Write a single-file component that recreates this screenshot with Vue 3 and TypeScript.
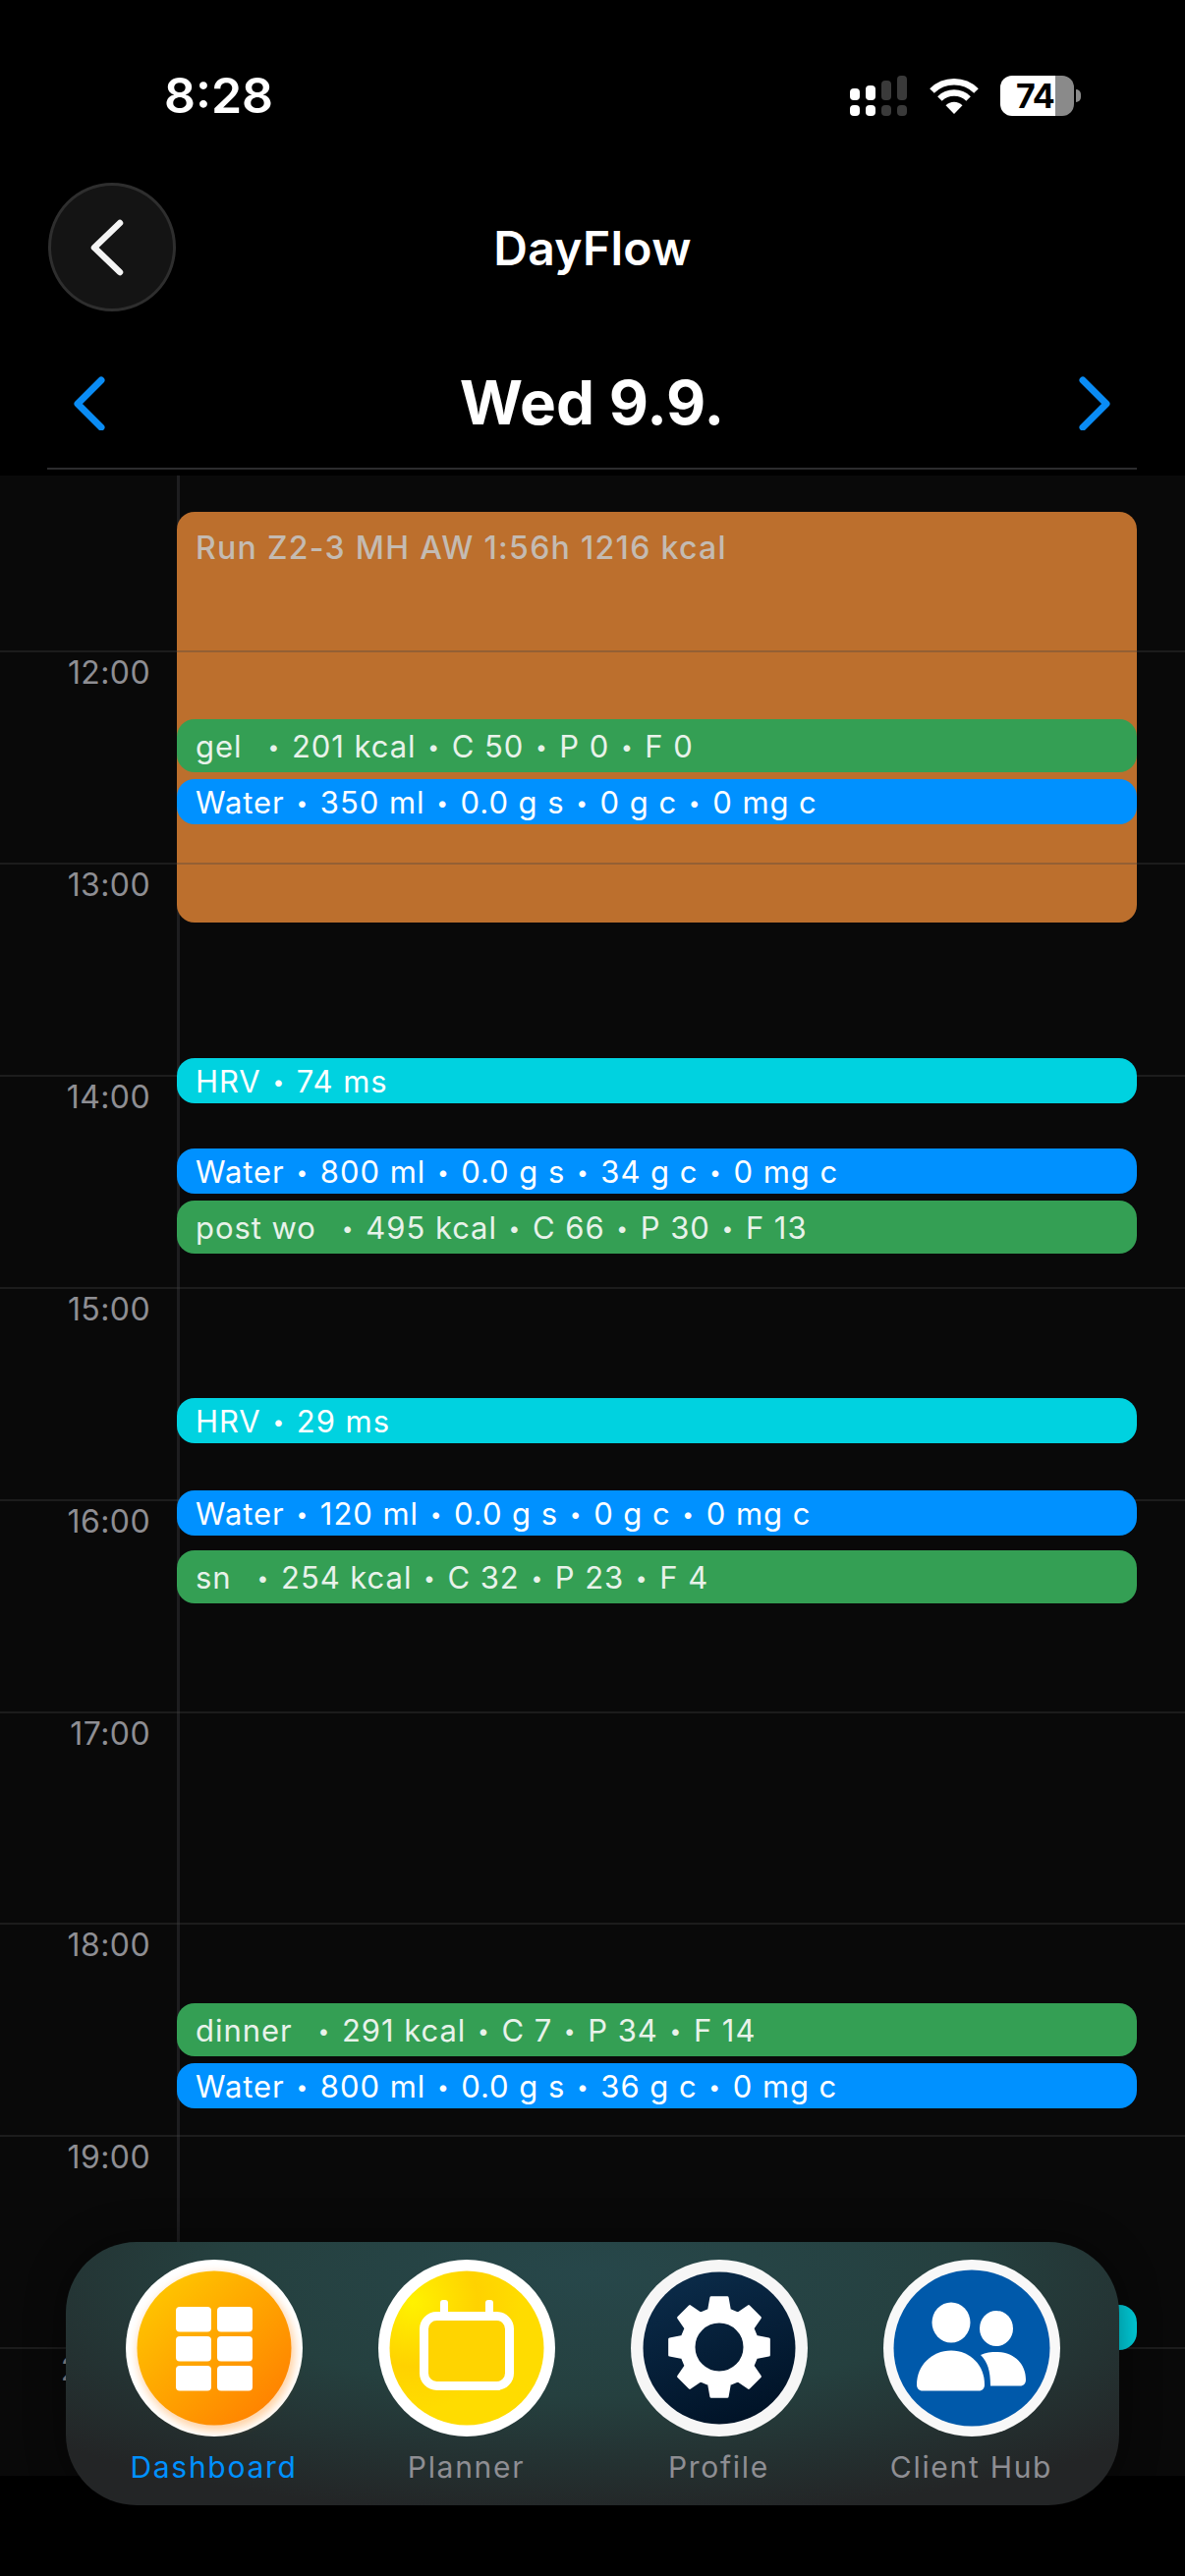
<script setup lang="ts">
interface Ev { top: number; h: number; kind: string; name: string; rest?: string }

const tlTop = 484
const hours = [12, 13, 14, 15, 16, 17, 18, 19, 20]
const lineY = (i: number) => 662 - tlTop + i * 215.9

const events: Ev[] = [
  { top: 732, h: 54, kind: 'meal', name: 'gel', rest: '• 201 kcal • C 50 • P 0 • F 0' },
  { top: 793, h: 46, kind: 'water', name: 'Water • 350 ml • 0.0 g s • 0 g c • 0 mg c' },
  { top: 1077, h: 46, kind: 'hrv', name: 'HRV • 74 ms' },
  { top: 1169, h: 46, kind: 'water', name: 'Water • 800 ml • 0.0 g s • 34 g c • 0 mg c' },
  { top: 1222, h: 54, kind: 'meal', name: 'post wo', rest: '• 495 kcal • C 66 • P 30 • F 13' },
  { top: 1423, h: 46, kind: 'hrv', name: 'HRV • 29 ms' },
  { top: 1517, h: 46, kind: 'water', name: 'Water • 120 ml • 0.0 g s • 0 g c • 0 mg c' },
  { top: 1578, h: 54, kind: 'meal', name: 'sn', rest: '• 254 kcal • C 32 • P 23 • F 4' },
  { top: 2039, h: 54, kind: 'meal', name: 'dinner', rest: '• 291 kcal • C 7 • P 34 • F 14' },
  { top: 2100, h: 46, kind: 'water', name: 'Water • 800 ml • 0.0 g s • 36 g c • 0 mg c' },
  { top: 2346, h: 46, kind: 'hrv', name: '' }
]

const parts = (s?: string): string[] => (s ? s.split('•') : [])

const grid = [
  [51, 48], [93, 48], [51, 78], [93, 78], [51, 108], [93, 108]
]

function gearPath(cx: number, cy: number): string {
  const rOut = 51, rRoot = 39, teeth = 8
  const pts: string[] = []
  for (let i = 0; i < teeth; i++) {
    const a = (i * Math.PI * 2) / teeth - Math.PI / 2
    const offs: [number, number][] = [[rRoot, -0.27], [rOut, -0.16], [rOut, 0.16], [rRoot, 0.27]]
    for (const [r, d] of offs) {
      pts.push(`${(cx + r * Math.cos(a + d)).toFixed(2)} ${(cy + r * Math.sin(a + d)).toFixed(2)}`)
    }
  }
  const hole = 26
  return `M${pts.join('L')}Z M${cx - hole} ${cy}a${hole} ${hole} 0 1 0 ${hole * 2} 0a${hole} ${hole} 0 1 0 ${-hole * 2} 0Z`
}
const gear = gearPath(90, 89)
</script>

<template>
  <div class="screen">
    <header class="status">
      <span class="clock">8:28</span>
      <div class="status-icons">
        <svg class="signal" width="58" height="41" viewBox="0 0 58 41">
          <rect x="0" y="13" width="10" height="12" rx="4" fill="#fff" />
          <rect x="16" y="10" width="10" height="15" rx="4" fill="#fff" />
          <rect x="32" y="5" width="10" height="20" rx="4" fill="#3a3a3a" />
          <rect x="48" y="0" width="10" height="25" rx="4" fill="#3a3a3a" />
          <rect x="0" y="30" width="10" height="11" rx="4" fill="#fff" />
          <rect x="16" y="30" width="10" height="11" rx="4" fill="#fff" />
          <rect x="32" y="30" width="10" height="11" rx="4" fill="#3a3a3a" />
          <rect x="48" y="30" width="10" height="11" rx="4" fill="#3a3a3a" />
        </svg>
        <svg class="wifi" width="50" height="37" viewBox="0 0 50 37">
          <path d="M2.500 13.500A32 32 0 0 1 47.500 13.500" fill="none" stroke="#fff" stroke-width="6.500" />
          <path d="M10.400 21.500A21 21 0 0 1 39.600 21.500" fill="none" stroke="#fff" stroke-width="6.500" />
          <path d="M25 37L16.500 28.200A12 12 0 0 1 33.500 28.200Z" fill="#fff" />
        </svg>
        <div class="battery"><span>74</span></div>
        <i class="nub"></i>
      </div>
    </header>

    <div class="navbar">
      <button class="back" aria-label="Back">
        <svg width="34" height="60" viewBox="0 0 34 60">
          <path d="M30 5L4 30L30 55" fill="none" stroke="#f4f4f4" stroke-width="6.500" stroke-linecap="round" stroke-linejoin="round" />
        </svg>
      </button>
      <h1 class="title">DayFlow</h1>
    </div>

    <div class="daterow">
      <svg width="32" height="56" viewBox="0 0 32 56">
        <path d="M28 5L4 29L28 53" fill="none" stroke="#0a8cf5" stroke-width="7" stroke-linecap="round" stroke-linejoin="round" />
      </svg>
      <h2 class="date">Wed 9.9.</h2>
      <svg width="32" height="56" viewBox="0 0 32 56">
        <path d="M4 5L28 29L4 53" fill="none" stroke="#0a8cf5" stroke-width="7" stroke-linecap="round" stroke-linejoin="round" />
      </svg>
    </div>

    <div class="divider"></div>

    <main class="timeline">
      <i class="vline"></i>
      <div class="ev-run">Run Z2-3 MH AW 1:56h 1216 kcal</div>
      <template v-for="(h, i) in hours" :key="h">
        <i class="hline" :style="{ top: lineY(i) + 'px' }"></i>
        <span class="hour" :style="{ top: lineY(i) + 'px' }">{{ h }}:00</span>
      </template>
      <div
        v-for="e in events"
        :key="e.top"
        class="ev"
        :class="e.kind"
        :style="{ top: e.top - tlTop + 'px', height: e.h + 'px' }"
      >
        <span class="txt" :class="{ nm: e.rest }"><template v-for="(p, j) in parts(e.name)" :key="j"><b v-if="j" class="dot">•</b>{{ p }}</template></span>
        <span v-if="e.rest" class="txt"><template v-for="(p, j) in parts(e.rest)" :key="j"><b v-if="j" class="dot">•</b>{{ p }}</template></span>
      </div>
    </main>

    <nav class="tabbar">
      <div class="tab active">
        <svg width="180" height="180" viewBox="0 0 180 180">
          <defs>
            <linearGradient id="gOrange" x1="0.15" y1="0.1" x2="0.85" y2="0.85">
              <stop offset="0" stop-color="#ffc400" />
              <stop offset="1" stop-color="#ff8500" />
            </linearGradient>
            <filter id="blurO" x="-20%" y="-20%" width="140%" height="140%"><feGaussianBlur stdDeviation="5" /></filter>
          </defs>
          <circle cx="90" cy="90" r="90" fill="#fff" />
          <circle cx="92" cy="94" r="80" fill="#ff9a30" opacity=".45" filter="url(#blurO)" />
          <circle cx="90" cy="90" r="78.500" fill="url(#gOrange)" />
          <rect v-for="g in grid" :key="g.join()" :x="g[0]" :y="g[1]" width="36" height="25.500" rx="4" fill="#fff" />
        </svg>
        <span>Dashboard</span>
      </div>
      <div class="tab">
        <svg width="180" height="180" viewBox="0 0 180 180">
          <defs>
            <radialGradient id="gYellow" cx="0.15" cy="0.2" r="0.7">
              <stop offset="0" stop-color="#fff200" />
              <stop offset="0.6" stop-color="#ffd200" />
              <stop offset="1" stop-color="#ffdc00" />
            </radialGradient>
          </defs>
          <circle cx="90" cy="90" r="90" fill="#fff" />
          <circle cx="90" cy="90" r="78.500" fill="url(#gYellow)" />
          <rect x="46.500" y="57.500" width="87" height="71" rx="13" fill="#ffd400" stroke="#fff" stroke-width="9" />
          <rect x="63" y="41" width="8" height="16" rx="3" fill="#fff" />
          <rect x="109" y="41" width="8" height="16" rx="3" fill="#fff" />
        </svg>
        <span>Planner</span>
      </div>
      <div class="tab">
        <svg width="180" height="180" viewBox="0 0 180 180">
          <defs>
            <linearGradient id="gNavy" x1="0.3" y1="0" x2="0.7" y2="1">
              <stop offset="0" stop-color="#0b2b49" />
              <stop offset="1" stop-color="#001226" />
            </linearGradient>
          </defs>
          <circle cx="90" cy="90" r="90" fill="#f6f6f6" />
          <circle cx="90" cy="90" r="77.500" fill="url(#gNavy)" />
          <path :d="gear" fill="#fff" fill-rule="evenodd" stroke="#fff" stroke-width="3" stroke-linejoin="round" />
        </svg>
        <span>Profile</span>
      </div>
      <div class="tab">
        <svg width="180" height="180" viewBox="0 0 180 180">
          <circle cx="90" cy="90" r="90" fill="#f8f8f8" />
          <circle cx="90" cy="90" r="79.500" fill="#0059aa" />
          <ellipse cx="69" cy="64" rx="19.500" ry="20.500" fill="#fff" />
          <ellipse cx="115" cy="70" rx="17" ry="18" fill="#fff" />
          <path d="M34 127C34 108 49 92.500 69 92.500C89 92.500 103 108 103 127C103 131 101 133.500 97 133.500H40C36 133.500 34 131 34 127Z" fill="#fff" />
          <path d="M99 97C104 94.500 110 94 115 94C133 94 145 106 145 122C145 126 143 128.500 139 128.500H109C109 113 106 104 99 97Z" fill="#fff" />
        </svg>
        <span>Client Hub</span>
      </div>
    </nav>
  </div>
</template>

<style>
html, body { margin: 0; background: #000; }
</style>

<style scoped>
.screen {
  position: relative;
  width: 1206px;
  height: 2622px;
  overflow: hidden;
  background: #000;
  color: #fff;
  font-family: Inter, "Liberation Sans", sans-serif;
}
.status {
  display: flex;
  justify-content: space-between;
  align-items: center;
  height: 41px;
  padding: 77px 106px 0 167px;
}
.clock { font-size: 50px; font-weight: 600; letter-spacing: 0; line-height: 41px; }
.status-icons { display: flex; align-items: center; }
.signal { margin-right: 23px; }
.wifi { margin-right: 22px; }
.battery {
  width: 75px;
  height: 41px;
  border-radius: 12px;
  background: linear-gradient(to right, #fff 56px, #8a8a8a 56px);
  color: #000;
  font-size: 34px;
  font-weight: 700;
  letter-spacing: -1px;
  line-height: 41px;
}
.battery span { display: block; padding-left: 16px; }
.nub { width: 5px; height: 13px; margin-left: 2px; border-radius: 0 6px 6px 0; background: #8a8a8a; }

.navbar {
  display: grid;
  grid-template-columns: 130px 1fr 130px;
  align-items: center;
  margin-top: 68px;
  padding: 0 49px;
}
.back {
  display: flex;
  align-items: center;
  justify-content: center;
  width: 130px;
  height: 131px;
  padding: 0 10px 0 0;
  box-sizing: border-box;
  border: 3px solid #2e2e2e;
  border-radius: 50%;
  background: #141414;
}
.title { margin: 0; text-align: center; font-size: 48px; font-weight: 600; line-height: 60px; letter-spacing: 0.3px; padding-top: 2px; }

.daterow {
  display: flex;
  align-items: center;
  justify-content: space-between;
  height: 56px;
  margin-top: 65px;
  padding: 0 76px 0 75px;
}
.date { margin: 0; font-size: 62px; font-weight: 700; line-height: 56px; letter-spacing: 0; }
.divider { height: 2px; margin: 38px 49px 0 48px; background: #2c2c2e; }

.timeline {
  position: relative;
  height: 2036px;
  margin-top: 6px;
  background: #090909;
}
.vline { position: absolute; left: 180px; top: 0; bottom: 0; width: 3px; background: #1e1e20; }
.hline { position: absolute; left: 0; right: 0; height: 2px; background: rgba(67, 67, 67, .33); z-index: 2; }
.hour {
  position: absolute;
  left: 0;
  width: 153px;
  margin-top: 2px;
  text-align: right;
  font-size: 32px;
  letter-spacing: 0.4px;
  line-height: 41px;
  color: #8e8e93;
}
.ev-run {
  position: absolute;
  z-index: 1;
  top: 37px;
  left: 180px;
  width: 977px;
  height: 418px;
  box-sizing: border-box;
  padding: 18px 19px;
  border-radius: 18px;
  background: #bc6f2d;
  color: #c4bbb2;
  font-size: 32px;
  font-weight: 500;
  letter-spacing: 1.3px;
  line-height: 37px;
}
.ev {
  position: absolute;
  z-index: 3;
  left: 180px;
  width: 977px;
  box-sizing: border-box;
  display: flex;
  align-items: center;
  padding: 0 19px;
  border-radius: 18px;
  font-size: 31px;
  letter-spacing: 0.95px;
  white-space: pre;
  color: #fff;
}
.txt { display: block; }
.nm { margin-right: 24px; }
.dot { font-size: 21px; font-weight: 400; margin: 0 2px; position: relative; top: -3px; }
.meal { background: #349f54; color: #e8f2ea; }
.water { background: #0091ff; }
.hrv { background: #00d2e0; }

.tabbar {
  position: absolute;
  z-index: 5;
  left: 67px;
  top: 2282px;
  width: 1072px;
  height: 268px;
  box-sizing: border-box;
  display: flex;
  padding: 18px 22px 0;
  border-radius: 72px;
  background:
    radial-gradient(ellipse 760px 250px at 50% 12%, #27474a 0%, #25403f 50%, rgba(35, 37, 38, 0) 100%),
    #232526;
  box-shadow: 0 0 40px rgba(0, 0, 0, .45);
}
.tab {
  flex: 1;
  display: flex;
  flex-direction: column;
  align-items: center;
  gap: 13px;
  color: #8e8e93;
  font-size: 30px;
  letter-spacing: 1.7px;
  line-height: 36px;
}
.tab.active { color: #0091ff; }
</style>
